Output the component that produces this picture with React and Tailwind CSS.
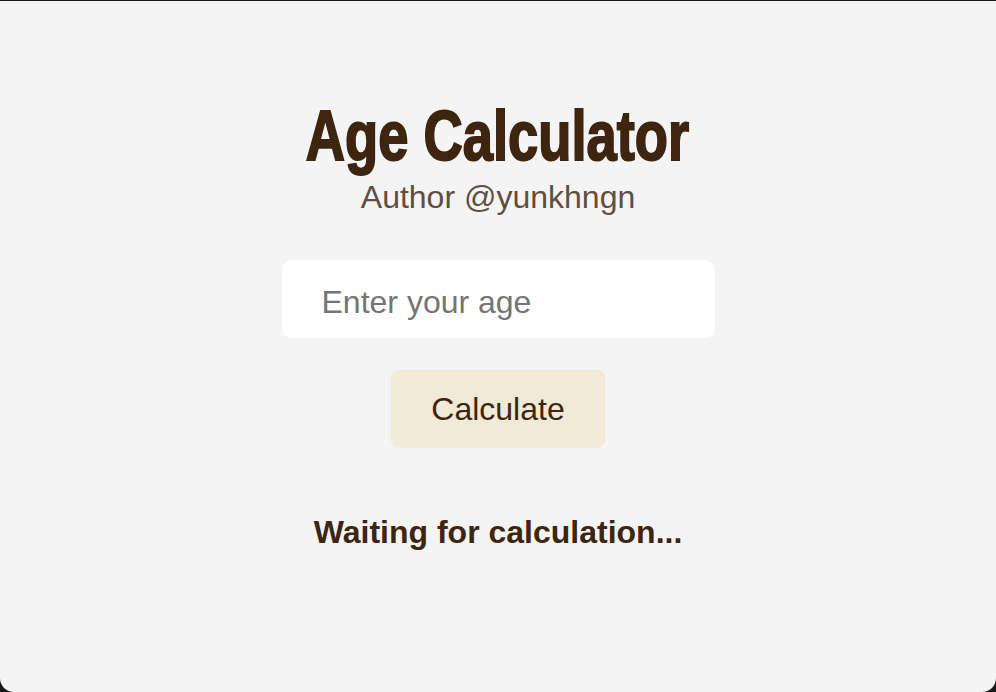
import React, { useState } from "react";

const App = () => {
  const [age, setAge] = useState("");

  return (
    <div className="w-[996px] h-[692px] bg-[#1a1a1a] pt-px overflow-hidden">
      <div
        className="h-[691px] bg-[#f4f4f4] rounded-b-[14px] flex flex-col items-center"
        style={{ fontFamily: '"Liberation Sans", Arial, sans-serif' }}
      >
        {/* Impact isn't available, so squeeze a heavy sans instead */}
        <h1 className="mt-[95px] text-[71px] leading-[80px] font-bold text-[#3e2510] scale-x-[0.765] [-webkit-text-stroke:2px_#3e2510] whitespace-nowrap">
          Age Calculator
        </h1>
        <p className="mt-[1px] text-[32px] leading-[40px] text-[#5e4f41] whitespace-nowrap">
          Author @yunkhngn
        </p>

        <input
          type="text"
          value={age}
          onChange={(e) => setAge(e.target.value)}
          placeholder="Enter your age"
          className="mt-[43px] w-[433px] h-[78px] rounded-[10px] bg-white pl-[40px] pr-4 pt-[6px] text-[32px] text-[#3e2510] placeholder:text-[#757575] outline-none"
        />

        <button className="mt-[32px] w-[214px] h-[78px] rounded-[8px] bg-[#f1ead6] text-[32px] text-[#3e2510]">
          Calculate
        </button>

        <p className="mt-[64px] text-[32px] leading-[40px] font-bold text-[#3e2510] whitespace-nowrap">
          Waiting for calculation...
        </p>
      </div>
    </div>
  );
};

export default App;
